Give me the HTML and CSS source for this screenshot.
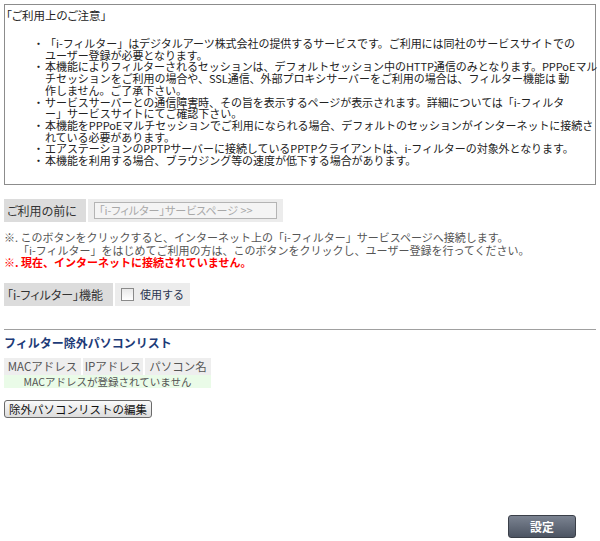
FILE: index.html
```html
<!DOCTYPE html>
<html lang="ja">
<head>
<meta charset="utf-8">
<link rel="stylesheet" href="styles.css">
</head>
<body>
<div class="page">
  <div class="notice">
    <div class="notice-title">「ご利用上のご注意」</div>
    <ul class="notice-list">
      <li>「i-フィルター」はデジタルアーツ株式会社の提供するサービスです。ご利用には同社のサービスサイトでの<br>ユーザー登録が必要となります。</li>
      <li>本機能によりフィルターされるセッションは、デフォルトセッション中のHTTP通信のみとなります。PPPoEマル<br>チセッションをご利用の場合や、SSL通信、外部プロキシサーバーをご利用の場合は、フィルター機能は 動<br>作しません。ご了承下さい。</li>
      <li>サービスサーバーとの通信障害時、その旨を表示するページが表示されます。詳細については「i-フィルタ<br>ー」サービスサイトにてご確認下さい。</li>
      <li>本機能をPPPoEマルチセッションでご利用になられる場合、デフォルトのセッションがインターネットに接続さ<br>れている必要があります。</li>
      <li>エアステーションのPPTPサーバーに接続しているPPTPクライアントは、i-フィルターの対象外となります。</li>
      <li>本機能を利用する場合、ブラウジング等の速度が低下する場合があります。</li>
    </ul>
  </div>

  <div class="row before-row">
    <div class="label-cell">ご利用の前に</div>
    <div class="value-cell"><button class="svc-btn" type="button" disabled>「i-フィルター」サービスページ &gt;&gt;</button></div>
  </div>

  <div class="notes">
    <div>※. このボタンをクリックすると、インターネット上の「i-フィルター」サービスページへ接続します。</div>
    <div class="indent">「i-フィルター」をはじめてご利用の方は、このボタンをクリックし、ユーザー登録を行ってください。</div>
    <div class="warn">※. 現在、インターネットに接続されていません。</div>
  </div>

  <div class="row func-row">
    <div class="label-cell">「i-フィルター」機能</div>
    <div class="value-cell check-cell"><span class="checkbox"></span><span class="check-label">使用する</span></div>
  </div>

  <hr class="sep">

  <h2 class="section-title">フィルター除外パソコンリスト</h2>
  <table class="pc-table">
    <thead>
      <tr><th class="c-mac">MACアドレス</th><th class="c-ip">IPアドレス</th><th class="c-name">パソコン名</th></tr>
    </thead>
    <tbody>
      <tr class="empty"><td colspan="3">MACアドレスが登録されていません</td></tr>
    </tbody>
  </table>
  <button class="edit-btn" type="button">除外パソコンリストの編集</button>

  <div class="footer">
    <button class="set-btn" type="button">設定</button>
  </div>
</div>
</body>
</html>
```

FILE: styles.css
```css
html, body {
  margin: 0;
  padding: 0;
  background: #fff;
}
body {
  font-family: "Noto Sans CJK JP", "Noto Sans", sans-serif;
  font-size: 11px;
  color: #333;
}
.page {
  width: 592px;
  padding: 4px 4px 0 4px;
}
.notice {
  border: 1px solid #8c8c8c;
  height: 179px;
  padding: 0;
}
.notice-title {
  padding: 3px 0 0 1px;
  font-size: 11.5px;
  line-height: 14px;
  color: #222;
  font-feature-settings: "palt";
}
.notice-list {
  list-style: none;
  margin: 16px 0 0 0;
  padding: 0 0 0 40px;
  line-height: 11.7px;
  color: #222;
  white-space: nowrap;
  letter-spacing: -0.05px;
}
.notice-list li::before {
  content: "・";
  display: inline-block;
  width: 12px;
  margin-left: -12px;
}
.row {
  display: flex;
  gap: 2px;
}
.before-row {
  margin-top: 14px;
  height: 23px;
}
.label-cell {
  background: #dcdcdc;
  color: #333;
  font-size: 12px;
  display: flex;
  align-items: center;
  padding: 0 3px;
  white-space: nowrap;
  font-feature-settings: "palt";
}
.value-cell {
  background: #ececec;
  display: flex;
  align-items: center;
  padding: 0 6px;
}
.before-row .label-cell { width: 76px; }
.before-row .value-cell { width: 183px; }
.svc-btn {
  font-family: inherit;
  font-size: 11px;
  color: #a8a8a8;
  background: #f4f4f4;
  border: 1px solid #b4b4b4;
  height: 17px;
  width: 183px;
  padding: 0 4px;
  text-align: left;
  line-height: 15px;
  white-space: nowrap;
  overflow: hidden;
  font-feature-settings: "palt";
}
.notes {
  margin-top: 9px;
  line-height: 12.5px;
  color: #555;
  white-space: nowrap;
}
.notes .indent { padding-left: 14px; }
.notes .warn {
  color: #f00;
  font-weight: bold;
}
.func-row {
  margin-top: 14px;
  height: 23px;
}
.func-row .label-cell { width: 103px; }
.check-cell {
  width: 63px;
  gap: 6px;
}
.checkbox {
  width: 11px;
  height: 11px;
  border: 1px solid #8a8a8a;
  background: linear-gradient(#e8e8e8, #fff);
}
.check-label {
  color: #2a3550;
  font-size: 11px;
}
.sep {
  border: 0;
  border-top: 1px solid #a0a0a0;
  margin: 23px 0 0 0;
}
.section-title {
  margin: 6px 0 0 0;
  font-size: 12px;
  line-height: 14px;
  color: #1d3b78;
  font-weight: bold;
}
.pc-table {
  border-collapse: separate;
  border-spacing: 0;
  margin-top: 8px;
  font-size: 11.5px;
  color: #555;
}
.pc-table th {
  font-weight: normal;
  background: #eeeeee;
  padding: 0;
  height: 17px;
  line-height: 17px;
  border-right: 2px solid #fff;
  white-space: nowrap;
  text-align: center;
}
.pc-table th.c-mac { width: 77px; }
.pc-table th.c-ip { width: 60px; }
.pc-table th.c-name { width: 66px; border-right: 0; }
.pc-table .empty td {
  background: #eafbe8;
  text-align: center;
  height: 13px;
  line-height: 13px;
  font-size: 10.5px;
  padding: 0;
}
.edit-btn {
  display: block;
  margin-top: 12px;
  font-family: inherit;
  font-size: 11.5px;
  color: #111;
  height: 18px;
  width: 148px;
  padding: 0;
  background: linear-gradient(#fafafa, #dcdcdc);
  border: 1px solid #6a6a6a;
  border-radius: 3px;
  line-height: 14px;
  white-space: nowrap;
}
.footer {
  display: flex;
  justify-content: flex-end;
  margin-top: 97px;
  padding-right: 20px;
}
.set-btn {
  width: 68px;
  height: 23px;
  font-family: inherit;
  font-size: 12px;
  font-weight: bold;
  color: #fff;
  background: linear-gradient(#7b8391, #4c5462);
  border: 1px solid #3a3f48;
  border-radius: 3px;
  padding: 0;
}
```
